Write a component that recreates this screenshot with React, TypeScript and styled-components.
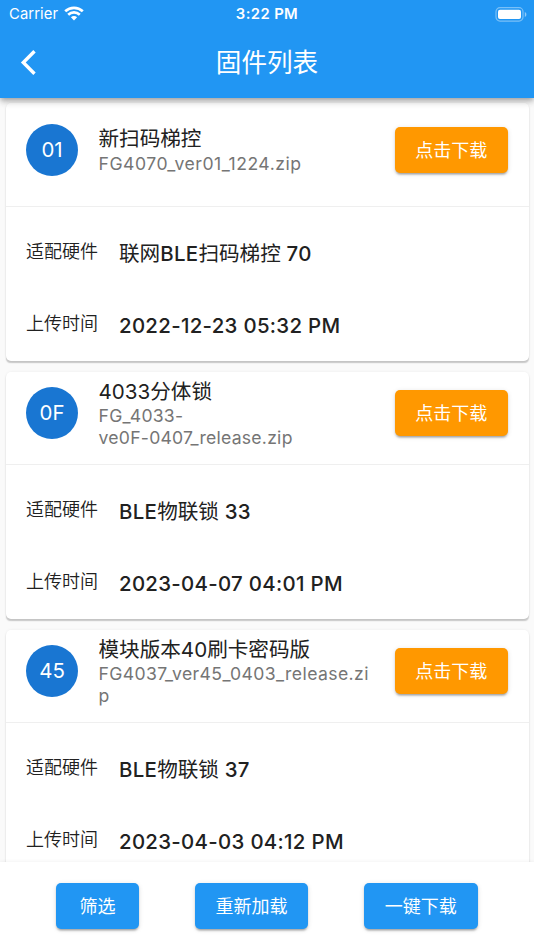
import React from "react";
import styled, { createGlobalStyle } from "styled-components";

const GlobalStyle = createGlobalStyle`
  * { box-sizing: border-box; }
  html, body { margin: 0; padding: 0; overflow: hidden; }
  body { font-family: Inter, "Noto Sans CJK SC", sans-serif; color: #212121; }
`;

const Screen = styled.div`
  display: flex;
  flex-direction: column;
  width: 534px;
  height: 950px;
  overflow: hidden;
  background: #fafafa;
`;

const AppBar = styled.header`
  position: relative;
  z-index: 1;
  flex: none;
  height: 98px;
  background: #2196f3;
  color: #fff;
  box-shadow: 0 2.5px 5px -1px rgba(0, 0, 0, 0.25), 0 5px 6px rgba(0, 0, 0, 0.12), 0 1px 10px rgba(0, 0, 0, 0.08);
`;

const StatusBar = styled.div`
  display: grid;
  grid-template-columns: 1fr auto 1fr;
  align-items: center;
  height: 27px;
  padding: 0 7px 0 9px;
  line-height: 28px;
`;

const Carrier = styled.div`
  display: flex;
  align-items: center;
  gap: 6px;
  font-size: 14.8px;
  letter-spacing: 0.1px;

  svg { margin-top: -1px; }
`;

const Clock = styled.div`
  margin-left: -2px;
  font-size: 14.8px;
  font-weight: 600;
  letter-spacing: 0.4px;
`;

const Battery = styled.svg`
  justify-self: end;
`;

const NavBar = styled.div`
  display: grid;
  grid-template-columns: 60px 1fr 60px;
  align-items: center;
  height: 71px;
`;

const BackButton = styled.button`
  display: flex;
  width: 60px;
  padding: 0 0 0 19px;
  border: 0;
  background: none;
  color: inherit;
`;

const Title = styled.h1`
  margin: 0;
  font-size: 25.6px;
  font-weight: 400;
  line-height: 36px;
  text-align: center;
`;

const List = styled.main`
  flex: 1;
  min-height: 0;
  overflow: hidden;
  display: flex;
  flex-direction: column;
  gap: 11px;
  padding: 5px 5.5px 0;
`;

const Card = styled.article`
  flex: none;
  background: #fff;
  border-radius: 5px;
  box-shadow: 0 1.8px 1.3px -0.5px rgba(0, 0, 0, 0.2), 0 0 3px rgba(0, 0, 0, 0.06);
`;

const CardHeader = styled.div<{ $tall: boolean }>`
  display: flex;
  align-items: flex-start;
  height: ${(p) => (p.$tall ? 104 : 93)}px;
  padding: ${(p) => (p.$tall ? "21px" : "15px")} 20.5px 0;
  border-bottom: 1px solid #efefef;
`;

const Avatar = styled.div`
  flex: none;
  width: 52px;
  height: 52px;
  border-radius: 50%;
  background: #1976d2;
  color: #fff;
  font-size: 20.4px;
  line-height: 52px;
  text-align: center;
`;

const Names = styled.div<{ $tall: boolean }>`
  flex: none;
  width: 276px;
  margin: ${(p) => (p.$tall ? "2px" : "-8px")} 0 0 20.5px;
`;

const Name = styled.div<{ $tall: boolean }>`
  height: ${(p) => (p.$tall ? 27 : 26)}px;
  font-size: 20.6px;
  line-height: 25px;
  white-space: nowrap;
`;

const FileName = styled.div<{ $tracking: number }>`
  color: #757575;
  font-size: 17.6px;
  letter-spacing: ${(p) => p.$tracking}px;
  line-height: 22px;
  white-space: pre;
`;

const Button = styled.button<{ $tone: "orange" | "blue"; $width: number }>`
  flex: none;
  width: ${(p) => p.$width}px;
  height: 46.5px;
  padding: 0;
  border: 0;
  border-radius: 5px;
  background: ${(p) => (p.$tone === "orange" ? "#ff9800" : "#2196f3")};
  color: #fff;
  font: 400 18px/47px Inter, "Noto Sans CJK SC", sans-serif;
  box-shadow: 0 3px 2px -2px rgba(0, 0, 0, 0.2), 0 2px 2px rgba(0, 0, 0, 0.14), 0 1px 5px rgba(0, 0, 0, 0.12);
`;

const HeaderAction = styled.div`
  margin: 2.5px 0 0 auto;
`;

const Details = styled.dl`
  margin: 0;
  padding: 10px 20.5px 0;
  height: 154px;
`;

const Field = styled.div`
  display: flex;
  height: 72px;
`;

const Label = styled.dt`
  flex: none;
  width: 93px;
  padding-top: 23px;
  font-size: 18px;
  font-weight: 350;
  line-height: 24px;
  color: #212121;
`;

const Value = styled.dd`
  margin: 0;
  padding-top: 24px;
  font-size: 20.4px;
  font-weight: 500;
  line-height: 26px;
  letter-spacing: 0.32px;
  white-space: nowrap;
`;

const Cjk = styled.span`
  font-weight: 400;
  letter-spacing: 0;
  font-size: 20.6px;
`;

const Footer = styled.footer`
  position: relative;
  z-index: 1;
  flex: none;
  display: flex;
  justify-content: space-between;
  height: 88px;
  padding: 20.5px 56.5px 0 56px;
  background: #fff;
  box-shadow: 0 0 4px rgba(0, 0, 0, 0.07);
`;

interface Firmware {
  code: string;
  name: string;
  file: string;
  tracking: number;
  hardware: React.ReactNode;
  time: string;
}

const items: Firmware[] = [
  {
    code: "01",
    name: "新扫码梯控",
    file: "FG4070_ver01_1224.zip",
    tracking: 0.53,
    hardware: <><Cjk>联网</Cjk>BLE<Cjk>扫码梯控</Cjk> 70</>,
    time: "2022-12-23 05:32 PM",
  },
  {
    code: "0F",
    name: "4033分体锁",
    file: "FG_4033-\nve0F-0407_release.zip",
    tracking: 0.25,
    hardware: <>BLE<Cjk>物联锁</Cjk> 33</>,
    time: "2023-04-07 04:01 PM",
  },
  {
    code: "45",
    name: "模块版本40刷卡密码版",
    file: "FG4037_ver45_0403_release.zi\np",
    tracking: 0.4,
    hardware: <>BLE<Cjk>物联锁</Cjk> 37</>,
    time: "2023-04-03 04:12 PM",
  },
];

const FirmwareCard = ({ item }: { item: Firmware }) => {
  const tall = !item.file.includes("\n");
  return (
    <Card>
      <CardHeader $tall={tall}>
        <Avatar>{item.code}</Avatar>
        <Names $tall={tall}>
          <Name $tall={tall}>{item.name}</Name>
          <FileName $tracking={item.tracking}>{item.file}</FileName>
        </Names>
        <HeaderAction>
          <Button $tone="orange" $width={113.5}>点击下载</Button>
        </HeaderAction>
      </CardHeader>
      <Details>
        <Field>
          <Label>适配硬件</Label>
          <Value>{item.hardware}</Value>
        </Field>
        <Field>
          <Label>上传时间</Label>
          <Value>{item.time}</Value>
        </Field>
      </Details>
    </Card>
  );
};

export default function App() {
  return (
    <>
      <GlobalStyle />
      <Screen>
        <AppBar>
          <StatusBar>
            <Carrier>
              Carrier
              <svg width="20" height="15" viewBox="0 0 20 15" fill="none" stroke="#fff" strokeWidth="2.7">
                <path d="M1.200 5.300C6.200 .7 13.800 .7 18.800 5.300" />
                <path d="M4.200 8.700C7.500 5.700 12.500 5.700 15.800 8.700" />
                <path d="M6.900 11.300C8.700 9.700 11.300 9.700 13.100 11.300L10 14.400Z" fill="#fff" stroke="none" />
              </svg>
            </Carrier>
            <Clock>3:22 PM</Clock>
            <Battery width="32" height="15" viewBox="0 0 32 15">
              <rect x="1" y="0.7" width="27" height="13.4" rx="4" fill="none" stroke="#fff" strokeOpacity="0.4" strokeWidth="1.2" />
              <rect x="3" y="2.7" width="23" height="9.4" rx="2" fill="#fff" />
              <path d="M29.800 5v5c1-.4 1.600-1.400 1.600-2.500S30.800 5.400 29.800 5Z" fill="#fff" fillOpacity="0.5" />
            </Battery>
          </StatusBar>
          <NavBar>
            <BackButton aria-label="返回">
              <svg width="18" height="26" viewBox="0 0 18 26" fill="none" stroke="#fff" strokeWidth="3.4">
                <path d="M15.500 1.300L4.300 12.500L15.500 23.700" />
              </svg>
            </BackButton>
            <Title>固件列表</Title>
          </NavBar>
        </AppBar>
        <List>
          {items.map((item) => (
            <FirmwareCard key={item.code} item={item} />
          ))}
        </List>
        <Footer>
          <Button $tone="blue" $width={83}>筛选</Button>
          <Button $tone="blue" $width={113.5}>重新加载</Button>
          <Button $tone="blue" $width={113.5}>一键下载</Button>
        </Footer>
      </Screen>
    </>
  );
}
